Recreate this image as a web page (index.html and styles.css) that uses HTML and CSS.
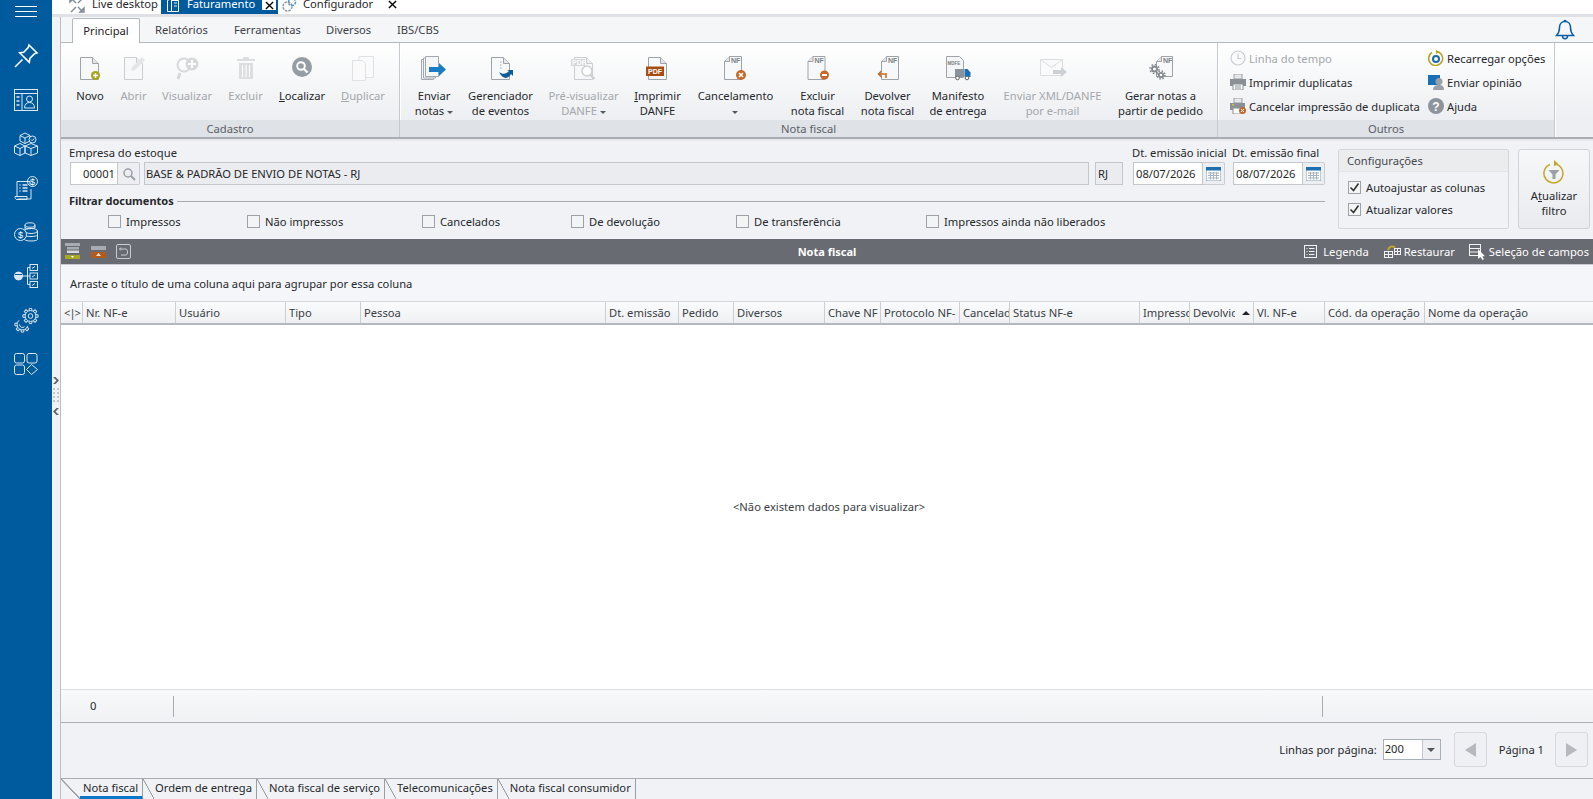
FILE: index.html
```html
<!DOCTYPE html>
<html lang="pt-BR">
<head>
  <meta charset="UTF-8">
  <title>Faturamento</title>
  <link rel="stylesheet" href="styles.css">
</head>
<body>
  <!-- simbolos reutilizados nos icones da faixa -->
  <svg class="defs" aria-hidden="true">
    <defs>
      <g id="page">
        <path d="M6.500 6.500h12l6 6v16h-18z" fill="#f7f8f9" stroke="#9ea3a9"/>
        <path d="M18.500 6.500v6h6" fill="#e3e5e8" stroke="#9ea3a9"/>
      </g>
      <g id="pageNf">
        <path d="M9.500 5.500h12v23h-17v-18z" fill="#f7f8f9" stroke="#9ea3a9"/>
        <path d="M4.500 10.500h5v-5" fill="#e3e5e8" stroke="#9ea3a9"/>
        <text x="11" y="12" class="nf-tag">NF</text>
      </g>
      <path id="tooth" d="M-1.500-5.400l.3-2.200h2.400l.3 2.200" fill="none" stroke="#dbe8f3"/>
    </defs>
  </svg>

  <aside class="sidebar">
    <div class="hamburger"><span></span><span></span><span></span></div>
    <nav class="side-icons">
      <a class="side-item"><svg width="26" height="26" viewBox="0 0 26 26" fill="none" stroke="#fff" stroke-width="1.600"><path d="M16 2l8 8-2.500.8-4.600 4.600-.6 4-3-3-3.600-3.600-3-3 4-.6L15.200 4.500z"/><path d="M9.500 16.500L2 24"/></svg></a>
      <a class="side-item"><svg width="24" height="22" viewBox="0 0 24 22" fill="none" stroke="#dbe8f3"><rect x=".5" y=".5" width="23" height="21"/><path d="M.5 4.500h23M8 4.500v17"/><path d="M2.500 8h3M2.500 12h3M2.500 16h3" stroke-width="1.400"/><circle cx="15.500" cy="10" r="3"/><path d="M10.500 19c0-3.500 2-5.500 5-5.500s5 2 5 5.500z"/></svg></a>
      <a class="side-item"><svg width="24" height="24" viewBox="0 0 24 24" fill="none" stroke="#dbe8f3"><path d="M11 1l5 2.500v5.500l-5 2.500-5-2.500V3.500zM6 3.500l5 2.500 5-2.500M11 6v5.500"/><path d="M6 11.500l5 2.500v7l-5 2.500-5.500-2.500v-7zM.5 14l5.500 2.500 5-2.500M6 16.500v7"/><path d="M17 11.500l6.500 2.500v7L17 23.500 11 21v-7zM11 14l6 2.500 6.500-2.500M17 16.500v7"/><circle cx="18.500" cy="7.500" r="3.500" fill="#005a9e"/><path d="M17 7.500l1.200 1.200 2-2.200"/></svg></a>
      <a class="side-item"><svg width="24" height="24" viewBox="0 0 24 24" fill="none" stroke="#dbe8f3"><path d="M3 20V5.500h13v3M17 13v10H4"/><path d="M1 20.500h12v3H3c-1.500 0-2-1.500-2-3z"/><path d="M5.500 9h1M8.500 9h5M5.500 12h1M8.500 12h5M5.500 15h1M8.500 15h5" stroke-width="1.400"/><circle cx="18.500" cy="5.500" r="5"/><text x="18.500" y="8.500" class="side-dollar">$</text></svg></a>
      <a class="side-item"><svg width="24" height="20" viewBox="0 0 24 20" fill="none" stroke="#dbe8f3"><ellipse cx="16" cy="3" rx="5" ry="2.200"/><path d="M11 3v5M21 3v3"/><path d="M11 5.500c1 1.500 8 1.500 10 0"/><ellipse cx="17" cy="9" rx="6.500" ry="2.500"/><path d="M10.500 9v8.500c1 2 12 2 13 0V9M10.500 13c1 2 12 2 13 0"/><circle cx="6.500" cy="12.500" r="6" fill="#005a9e"/><text x="6.500" y="16" class="side-dollar">$</text></svg></a>
      <a class="side-item"><svg width="24" height="24" viewBox="0 0 24 24" fill="none" stroke="#dbe8f3"><rect x="16" y=".5" width="7.500" height="6"/><rect x="16" y="9" width="7.500" height="6"/><rect x="16" y="17.500" width="7.500" height="6"/><path d="M16 3.500h-2.500v17H16M13.500 12H16M8 12h5.500"/><path d="M18 4.500l3-2M18 13l3-2M18 21.500l3-2"/><circle cx="4.500" cy="12" r="4" fill="#dbe8f3"/><path d="M1 10.500h7" stroke="#005a9e"/></svg></a>
      <a class="side-item"><svg width="25" height="25" viewBox="0 0 25 25" fill="none" stroke="#dbe8f3">
        <g transform="translate(16.500 8)"><circle r="5.400"/><circle r="2.300"/><use href="#tooth"/><use href="#tooth" transform="rotate(45)"/><use href="#tooth" transform="rotate(90)"/><use href="#tooth" transform="rotate(135)"/><use href="#tooth" transform="rotate(180)"/><use href="#tooth" transform="rotate(225)"/><use href="#tooth" transform="rotate(270)"/><use href="#tooth" transform="rotate(315)"/></g>
        <g transform="translate(8.500 16.500)"><path d="M-3.500-4.100a5.400 5.400 0 1 0 8.700 5.500"/><path d="M-3 0a3 3 0 0 0 5 2.200"/><use href="#tooth" transform="rotate(270)"/><use href="#tooth" transform="rotate(225)"/><use href="#tooth" transform="rotate(180)"/><use href="#tooth" transform="rotate(135)"/></g>
      </svg></a>
      <a class="side-item"><svg width="24" height="22" viewBox="0 0 24 22" fill="none" stroke="#dbe8f3"><rect x=".5" y=".5" width="10" height="9.500" rx="2"/><rect x="13" y=".5" width="10" height="9.500" rx="2"/><rect x=".5" y="12" width="10" height="9.500" rx="2"/><path d="M17.500 11.500l6 5-6 5-5-5z"/></svg></a>
    </nav>
  </aside>

  <div class="content">
    <div class="doc-tabs">
      <div class="doc-tab doc-tab-first">
        <svg width="16" height="16" viewBox="0 0 16 16" fill="none" stroke="#7f8a96" stroke-width="1.400"><path d="M2 1l5 5M14 1L9 6M2 15l5-5M14 15l-5-5"/><path d="M1 1h4L1 5zM15 15h-4l4-4z" fill="#aeb6be"/></svg>
        <span>Live desktop</span>
      </div>
      <div class="doc-tab doc-tab-active">
        <svg width="14" height="14" viewBox="0 0 14 14" fill="none" stroke="#fff"><path d="M1.500 2.500l4-2v13h-4zM5.500 2.500h7v11h-7"/><path d="M8 5h3M8 8h3" stroke-width=".9"/></svg>
        <span>Faturamento</span>
        <b class="doc-close-box"><svg width="9" height="9" viewBox="0 0 10 10" stroke="#000" stroke-width="1.500"><path d="M1 1l8 8M9 1l-8 8"/></svg></b>
      </div>
      <div class="doc-tab doc-tab-last">
        <svg width="16" height="16" viewBox="0 0 16 16" fill="none" stroke="#8b99a8" stroke-width="1.500" stroke-dasharray="2.500 1"><circle cx="6.500" cy="9.500" r="4.500"/><circle cx="11" cy="5" r="3.500" stroke="#5b93c7"/></svg>
        <span>Configurador</span>
        <b class="doc-close"><svg width="9" height="9" viewBox="0 0 10 10" stroke="#000" stroke-width="1.500"><path d="M1 1l8 8M9 1l-8 8"/></svg></b>
      </div>
    </div>

    <div class="workspace">
      <div class="splitter">
        <svg width="8" height="38" viewBox="0 0 8 38" fill="#5f6369"><path d="M1 0h2.500L7 3.500 3.500 7H1l3.500-3.500zM7 31H4.500L1 34.500 4.500 38H7l-3.500-3.500z"/><path d="M1 11h2v2H1zM5 11h2v2H5zM1 15h2v2H1zM5 15h2v2H5zM1 19h2v2H1zM5 19h2v2H5zM1 23h2v2H1zM5 23h2v2H5z" fill="#c3c6ca"/></svg>
      </div>

      <main class="main">
        <div class="ribbon-tabs">
          <span class="r-tab r-tab-active">Principal</span>
          <span class="r-tab">Relatórios</span>
          <span class="r-tab">Ferramentas</span>
          <span class="r-tab">Diversos</span>
          <span class="r-tab">IBS/CBS</span>
          <svg class="bell" width="20" height="22" viewBox="0 0 20 22" fill="none" stroke="#0a5fa3" stroke-width="1.500"><path d="M10 2.500c-3.500 0-5.500 2.700-5.500 6 0 4-1 6-3 8h17c-2-2-3-4-3-8 0-3.300-2-6-5.500-6z"/><path d="M9 2.500c0-1.500 2-1.500 2 0M7.500 17c0 3.500 5 3.500 5 0"/></svg>
        </div>

        <div class="ribbon">
          <section class="rb-group rb-cadastro">
            <div class="rb-items">
              <button class="rb-btn"><svg width="32" height="32"><use href="#page"/><circle cx="21.500" cy="24.500" r="4.500" fill="#a8a51c"/><path d="M19 24.500h5M21.500 22v5" stroke="#fff" stroke-width="1.400"/></svg><span>Novo</span></button>
              <button class="rb-btn is-off"><svg width="32" height="32" class="faded"><use href="#page"/><path d="M13 20l1-4L24 6l3 3-10 10z" fill="#cfd2d6"/></svg><span>Abrir</span></button>
              <button class="rb-btn is-off"><svg width="32" height="32" viewBox="0 0 32 32"><circle cx="13" cy="14" r="6.500" fill="none" stroke="#d6d8db" stroke-width="2"/><path d="M9 22l-2 6" stroke="#d6d8db" stroke-width="3"/><circle cx="21" cy="13" r="6.500" fill="#d6d8db"/><path d="M21 9v8M17 13h8" stroke="#fff" stroke-width="2"/></svg><span>Visualizar</span></button>
              <button class="rb-btn is-off"><svg width="32" height="32" viewBox="0 0 32 32" fill="#dcdee1"><path d="M13 6h6v2h6v2H7V8h6z"/><path d="M9 12h14v16H9z"/><path d="M12.500 14v12M16 14v12M19.500 14v12" stroke="#fff"/></svg><span>Excluir</span></button>
              <button class="rb-btn"><svg width="32" height="32" viewBox="0 0 32 32"><circle cx="16" cy="16" r="10" fill="#959ca4"/><circle cx="15" cy="15" r="3.800" fill="none" stroke="#fff" stroke-width="2"/><path d="M18 18l3.500 3.500" stroke="#fff" stroke-width="2.400"/></svg><span><u>L</u>ocalizar</span></button>
              <button class="rb-btn is-off"><svg width="32" height="32" viewBox="0 0 32 32" fill="#fafafa" stroke="#dfe1e4"><path d="M12 5.500h14.500v21H12z"/><path d="M5.500 9.500h10l3 3v17h-13z"/></svg><span><u>D</u>uplicar</span></button>
            </div>
            <div class="rb-title">Cadastro</div>
          </section>

          <section class="rb-group rb-nota">
            <div class="rb-items">
              <button class="rb-btn"><svg width="32" height="32" viewBox="0 0 32 32"><g fill="#f4f5f6" stroke="#a3a8ae"><path d="M3.500 8.500h12v20h-12z"/><path d="M5.500 7h12v20h-12z"/><path d="M7.500 5.500h13v20h-13z"/></g><path d="M11 17h10v-4l7 6.500-7 6.500v-4H11z" fill="#1a7cc4" transform="translate(0 -1)"/></svg><span>Enviar<br>notas <i class="caret"></i></span></button>
              <button class="rb-btn"><svg width="32" height="32"><use href="#page"/><path d="M15 11h1.500M15 14h1.500M15 17h1.500" stroke="#9ea3a9"/><path d="M14 21c4 3 7 2 10-1l-2-1h6v6l-2-2c-3 5-8 6-12-2z" fill="#0f5c96"/></svg><span>Gerenciador<br>de eventos</span></button>
              <button class="rb-btn is-off"><svg width="32" height="32" class="faded"><use href="#page"/><rect x="3" y="8" width="14" height="7" fill="#b3b6ba"/><text x="4" y="14" class="pdf-tag">PDF</text><circle cx="19" cy="20" r="5" fill="#fff" stroke="#a4a8ad" stroke-width="1.500"/><path d="M22.500 24l4 4" stroke="#a4a8ad" stroke-width="2.400"/></svg><span>Pré-visualizar<br>DANFE <i class="caret"></i></span></button>
              <button class="rb-btn"><svg width="32" height="32"><use href="#page"/><rect x="4" y="15.500" width="18" height="9.500" fill="#a74e15"/><text x="6" y="23" class="pdf-tag">PDF</text></svg><span><u>I</u>mprimir<br>DANFE</span></button>
              <button class="rb-btn"><svg width="32" height="32"><use href="#pageNf"/><circle cx="21" cy="24" r="5" fill="#c7692a"/><path d="M19 22l4 4M23 22l-4 4" stroke="#fff" stroke-width="1.600"/></svg><span>Cancelamento<br><i class="caret"></i></span></button>
              <button class="rb-btn"><svg width="32" height="32"><use href="#pageNf" x="1.500"/><circle cx="22.500" cy="24" r="4.500" fill="#c7692a"/><path d="M20 24h5" stroke="#fff" stroke-width="2"/></svg><span>Excluir<br>nota fiscal</span></button>
              <button class="rb-btn"><svg width="32" height="32"><use href="#pageNf" x="5"/><path d="M14 27v-4H7M9.500 20L6.500 23l3 3" fill="none" stroke="#c7692a" stroke-width="1.500"/></svg><span>Devolver<br>nota fiscal</span></button>
              <button class="rb-btn"><svg width="32" height="32" viewBox="0 0 32 32"><path d="M4.500 5.500h13l4 4v17h-17z" fill="#f4f5f6" stroke="#9ea3a9"/><text x="5.500" y="13.500" class="mdfe-tag">MDFE</text><rect x="13" y="18" width="9" height="8" fill="#8b9299"/><path d="M22.500 18h3l3 3.500V26h-6z" fill="#1a70b8"/><circle cx="15.500" cy="27" r="1.800" fill="#fff" stroke="#666"/><circle cx="25" cy="27" r="1.800" fill="#fff" stroke="#666"/></svg><span>Manifesto<br>de entrega</span></button>
              <button class="rb-btn is-off"><svg width="32" height="32" viewBox="0 0 32 32"><path d="M3.500 8.500h22v16h-22z" fill="#fafafa" stroke="#dcdee1"/><path d="M3.500 8.500l11 8 11-8" fill="none" stroke="#dcdee1"/><path d="M16 19h8v-3l6 5-6 5v-3h-8z" fill="#cdd0d4"/></svg><span>Enviar XML/DANFE<br>por e-mail</span></button>
              <button class="rb-btn"><svg width="32" height="32" viewBox="0 0 32 32"><path d="M16.500 5.500h11v20h-16v-15z" fill="#f7f8f9" stroke="#9ea3a9"/><path d="M11.500 10.500h5v-5" fill="#e3e5e8" stroke="#9ea3a9"/><text x="18" y="12" class="nf-tag">NF</text><g fill="#fff" stroke="#858a90"><circle cx="9.500" cy="18" r="2.500" stroke-width="2"/><circle cx="9.500" cy="18" r="4.500" fill="none" stroke-width="1.500" stroke-dasharray="1.700 1.800"/><circle cx="16" cy="24" r="2.200" stroke-width="1.800"/><circle cx="16" cy="24" r="4" fill="none" stroke-width="1.500" stroke-dasharray="1.600 1.550"/></g></svg><span>Gerar notas a<br>partir de pedido</span></button>
            </div>
            <div class="rb-title">Nota fiscal</div>
          </section>

          <section class="rb-group rb-outros">
            <div class="rb-lists">
              <ul class="rb-list">
                <li class="is-off"><svg width="16" height="16" viewBox="0 0 16 16" fill="none" stroke="#c9ccd0" stroke-width="1.200"><circle cx="8" cy="8" r="7"/><path d="M8 3.500V8.500h3.500"/></svg>Linha do tempo</li>
                <li><svg width="16" height="16" viewBox="0 0 16 16"><path d="M4 0h8v5H4z" fill="#e6e7e9" stroke="#9ca0a5"/><path d="M0 5h16v7H0z" fill="#8a9096"/><path d="M3 10h10v6H3z" fill="#fff" stroke="#8a9096"/><path d="M5 12h6M5 14h6" stroke="#8a9096"/></svg>Imprimir duplicatas</li>
                <li><svg width="16" height="16" viewBox="0 0 16 16"><path d="M4 0h8v5H4z" fill="#e6e7e9" stroke="#9ca0a5"/><path d="M0 5h15v7H0z" fill="#8a9096"/><path d="M2 6h2v1.500H2z" fill="#cfc53c"/><path d="M3 10h9v6H3z" fill="#fff" stroke="#8a9096"/><circle cx="12.500" cy="12.500" r="3.500" fill="#c7692a"/><path d="M11 11l3 3M14 11l-3 3" stroke="#fff"/></svg>Cancelar impressão de duplicata</li>
              </ul>
              <ul class="rb-list">
                <li><svg width="16" height="16" viewBox="0 0 16 16" fill="none"><path d="M4 2.500a7 7 0 1 0 4-1" stroke="#b9a21c" stroke-width="1.500"/><path d="M8 0l3 2-3 2z" fill="#b9a21c"/><circle cx="8" cy="9" r="3" stroke="#1b69ad" stroke-width="2"/></svg>Recarregar opções</li>
                <li><svg width="16" height="16" viewBox="0 0 16 16"><path d="M0 1h12v10H0z" fill="#1a70b8"/><circle cx="11" cy="7.500" r="3.500" fill="#9aa0a6"/><path d="M5 16c0-4 3-5 6-5s5 1 5 5z" fill="#9aa0a6"/></svg>Enviar opinião</li>
                <li><svg width="16" height="16" viewBox="0 0 16 16"><circle cx="8" cy="8" r="8" fill="#8d949c"/><text x="8" y="12.500" class="help-tag">?</text></svg><span>Ajuda</span></li>
              </ul>
            </div>
            <div class="rb-title">Outros</div>
          </section>
          <div class="rb-rest"></div>
        </div>

        <div class="filters">
          <div class="filters-left">
            <div class="field-row">
              <div class="field field-empresa">
                <label>Empresa do estoque</label>
                <div class="field-inputs">
                  <input class="in in-code" value="00001">
                  <span class="in-btn"><svg width="14" height="14" viewBox="0 0 14 14" fill="none" stroke="#9aa0a6" stroke-width="1.500"><circle cx="6" cy="6" r="4"/><path d="M9 9l4 4" stroke-width="2"/></svg></span>
                  <input class="in in-name" value="BASE &amp; PADRÃO DE ENVIO DE NOTAS - RJ" readonly>
                </div>
              </div>
              <div class="field field-uf">
                <label>&nbsp;</label>
                <input class="in in-uf" value="RJ" readonly>
              </div>
              <div class="field field-date">
                <label>Dt. emissão inicial</label>
                <div class="field-inputs">
                  <input class="in in-date" value="08/07/2026">
                  <span class="in-btn"><svg width="15" height="14" viewBox="0 0 15 14"><path d="M0 0h15v14H0z" fill="#fff" stroke="#7c99b3"/><path d="M0 0h15v3.500H0z" fill="#1d6fb0"/><path d="M2 6h11M2 8.500h11M2 11h11M4.500 5v7.500M7.500 5v7.500M10.500 5v7.500" stroke="#a8b2bc"/></svg></span>
                </div>
              </div>
              <div class="field field-date">
                <label>Dt. emissão final</label>
                <div class="field-inputs">
                  <input class="in in-date" value="08/07/2026">
                  <span class="in-btn"><svg width="15" height="14" viewBox="0 0 15 14"><path d="M0 0h15v14H0z" fill="#fff" stroke="#7c99b3"/><path d="M0 0h15v3.500H0z" fill="#1d6fb0"/><path d="M2 6h11M2 8.500h11M2 11h11M4.500 5v7.500M7.500 5v7.500M10.500 5v7.500" stroke="#a8b2bc"/></svg></span>
                </div>
              </div>
            </div>
            <div class="legend"><b>Filtrar documentos</b><span class="legend-line"></span></div>
            <div class="checks">
              <label class="chk"><span class="box"></span>Impressos</label>
              <label class="chk"><span class="box"></span>Não impressos</label>
              <label class="chk"><span class="box"></span>Cancelados</label>
              <label class="chk"><span class="box"></span>De devolução</label>
              <label class="chk"><span class="box"></span>De transferência</label>
              <label class="chk"><span class="box"></span>Impressos ainda não liberados</label>
            </div>
          </div>

          <div class="config">
            <div class="config-head">Configurações</div>
            <div class="config-body">
              <label class="chk"><span class="box"><svg width="11" height="11" viewBox="0 0 11 11" fill="none" stroke="#333" stroke-width="1.600"><path d="M1.500 5.500l3 3 5-7"/></svg></span>Autoajustar as colunas</label>
              <label class="chk"><span class="box"><svg width="11" height="11" viewBox="0 0 11 11" fill="none" stroke="#333" stroke-width="1.600"><path d="M1.500 5.500l3 3 5-7"/></svg></span>Atualizar valores</label>
            </div>
          </div>

          <button class="refresh">
            <svg width="22" height="24" viewBox="0 0 22 24" fill="none"><path d="M7 4.500a9.500 9.500 0 1 0 5-.5" stroke="#c4a72a" stroke-width="1.500"/><path d="M11 0l4 3.500-4 3z" fill="#c4a72a"/><path d="M5.500 10h11l-4 4.500V19h-3v-4.500z" fill="#9aa0a6"/></svg>
            <span>A<u>t</u>ualizar<br>filtro</span>
          </button>
        </div>

        <div class="grid-bar">
          <div class="grid-bar-left">
            <svg width="16" height="17" viewBox="0 0 16 17"><path d="M0 0h15v3H0z" fill="#a8acb2"/><path d="M2 4h12v2.500H2z" fill="#a8acb2"/><path d="M2 7.500h12v2.500H2z" fill="#d5d7da"/><path d="M0 12h15v4H0z" fill="#aaa81e"/><path d="M6 13h3l-1.500 2z" fill="#fff"/></svg>
            <svg width="15" height="12" viewBox="0 0 15 12"><path d="M0 0h15v4H0z" fill="#a8acb2"/><path d="M0 6h15v6H0z" fill="#b25b1e"/><path d="M5 10l2.500-3L10 10z" fill="#f3e3d3"/></svg>
            <svg width="15" height="15" viewBox="0 0 15 15" fill="none" stroke="#c9ccd0"><rect x=".5" y=".5" width="14" height="14" rx="1.500"/><path d="M5 3.500L3.500 5 5 6.500M3.500 5H10c2 0 2 6 0 6H5"/></svg>
          </div>
          <div class="grid-bar-title">Nota fiscal</div>
          <div class="grid-bar-right">
            <span class="bar-act bar-legenda"><svg width="13" height="13" viewBox="0 0 13 13" fill="none" stroke="#f2f3f4"><rect x=".5" y=".5" width="12" height="12"/><path d="M2.500 3.500h1M5 3.500h5.500M2.500 6.500h1M5 6.500h5.500M2.500 9.500h1M5 9.500h5.500"/></svg>Legenda</span>
            <span class="bar-act bar-restaurar"><svg width="17" height="13" viewBox="0 0 17 13" fill="none" stroke="#f2f3f4"><rect x=".5" y="6.500" width="8" height="6"/><rect x="10.500" y="3.500" width="6" height="6"/><path d="M.5 9.500h8M4.500 6.500v6M10.500 6.500h6M13.500 3.500v6"/><path d="M4 5c1-4 4-4 7-3" stroke="#c0a52a" stroke-width="2"/></svg>Restaurar</span>
            <span class="bar-act bar-selecao"><svg width="17" height="16" viewBox="0 0 17 16" fill="none" stroke="#f2f3f4"><rect x=".5" y=".5" width="11" height="11"/><path d="M.5 4.500h11M.5 8h11"/><path d="M9 5v10l2.500-2 2 3 1.500-.8-1.800-3H16z" fill="#fff" stroke="none"/></svg>Seleção de campos</span>
          </div>
        </div>

        <div class="group-panel">Arraste o título de uma coluna aqui para agrupar por essa coluna</div>

        <div class="col-head">
          <span class="col-mark">&lt;|&gt;</span>
          <span>Nr. NF-e</span>
          <span>Usuário</span>
          <span>Tipo</span>
          <span>Pessoa</span>
          <span>Dt. emissão</span>
          <span>Pedido</span>
          <span>Diversos</span>
          <span>Chave NF</span>
          <span>Protocolo NF-</span>
          <span>Cancelad</span>
          <span>Status NF-e</span>
          <span>Impresso</span>
          <span class="col-sorted"><em>Devolvido</em><i class="sort-up"></i></span>
          <span>Vl. NF-e</span>
          <span>Cód. da operação</span>
          <span>Nome da operação</span>
        </div>

        <div class="grid-body">&lt;Não existem dados para visualizar&gt;</div>

        <div class="grid-foot">
          <span class="foot-count">0</span>
          <span class="foot-fill"></span>
        </div>

        <div class="pager">
          <span class="pager-label">Linhas por página:</span>
          <div class="combo"><span class="combo-val">200</span><span class="combo-arrow"></span></div>
          <button class="pg-btn"><span class="tri-left"></span></button>
          <span class="pager-page">Página 1</span>
          <button class="pg-btn"><span class="tri-right"></span></button>
        </div>

        <div class="sheet-tabs">
          <span class="sheet-slant sheet-slant-first"></span>
          <span class="sheet sheet-active">Nota fiscal</span>
          <span class="sheet-slant"></span>
          <span class="sheet">Ordem de entrega</span>
          <span class="sheet-slant"></span>
          <span class="sheet">Nota fiscal de serviço</span>
          <span class="sheet-slant"></span>
          <span class="sheet">Telecomunicações</span>
          <span class="sheet-slant"></span>
          <span class="sheet">Nota fiscal consumidor</span>
        </div>
      </main>
    </div>
  </div>
</body>
</html>
```

FILE: styles.css
```css
/* Estilos da tela de faturamento */
* {
  box-sizing: border-box;
}

body {
  font-family: "Noto Sans", "Open Sans", Arial, sans-serif;
  font-size: 11.2px;
  color: #26282c;
  display: flex;
  height: 799px;
  margin: 0;
  overflow: hidden;
  background-color: #f0f2f5;
}

button {
  font: inherit;
  color: inherit;
  padding: 0;
  background: none;
  border: 0;
}

.defs {
  position: absolute;
  width: 0;
  height: 0;
}

.nf-tag {
  font: bold 7px "Liberation Sans", sans-serif;
  fill: #7c8187;
}

.pdf-tag {
  font: bold 7px "Liberation Sans", sans-serif;
  fill: #fff;
}

.mdfe-tag {
  font: bold 4.500px "Liberation Sans", sans-serif;
  fill: #777c82;
}

.help-tag {
  font: bold 12px "Liberation Sans", sans-serif;
  fill: #fff;
  text-anchor: middle;
}

.side-dollar {
  font: 9px "Liberation Sans", sans-serif;
  fill: #fff;
  stroke: none;
  text-anchor: middle;
}

/* barra lateral */
.sidebar {
  width: 52px;
  flex: none;
  background-color: #005a9e;
}

.hamburger {
  height: 22px;
  padding: 6px 15px 0;
}

.hamburger span {
  display: block;
  height: 1px;
  margin-bottom: 4px;
  background-color: #fff;
}

.side-icons {
  margin-top: 12px;
}

.side-item {
  height: 44px;
  display: flex;
  align-items: center;
  justify-content: center;
}

/* abas de documentos */
.content {
  flex: 1;
  min-width: 0;
  display: flex;
  flex-direction: column;
}

.doc-tabs {
  height: 17px;
  flex: none;
  display: flex;
  padding-left: 17px;
  background-color: #fff;
  border-bottom: 3px solid #dfe1e4;
  overflow: hidden;
}

.doc-tab {
  display: flex;
  align-items: center;
  flex: none;
  height: 14px;
  white-space: nowrap;
}

.doc-tab > span {
  margin-bottom: 6px;
  line-height: 14px;
}

.doc-tab > svg {
  flex: none;
  margin-top: -4px;
}

.doc-tab-first {
  width: 92px;
  gap: 7px;
}

.doc-tab-active {
  width: 117px;
  padding: 0 2px 0 5px;
  gap: 7px;
  background-color: #005a9e;
  color: #fff;
}

.doc-tab-last {
  gap: 6px;
  margin-left: 3px;
}

.doc-close-box {
  width: 14px;
  height: 10px;
  margin-left: auto;
  align-self: flex-start;
  display: flex;
  align-items: center;
  justify-content: center;
  background-color: #fff;
}

.doc-close {
  display: flex;
  margin: -6px 0 0 9px;
}

.workspace {
  flex: 1;
  min-height: 0;
  display: flex;
}

.splitter {
  width: 8px;
  flex: none;
  display: flex;
  align-items: center;
  padding-bottom: 24px;
}

.main {
  flex: 1;
  min-width: 0;
  display: flex;
  flex-direction: column;
  border-left: 1px solid #bcc0c6;
}

/* abas da faixa */
.ribbon-tabs {
  height: 26px;
  flex: none;
  display: grid;
  grid-template-columns: 68px 79px 92px 71px 1fr auto;
  align-items: end;
  padding-left: 11px;
  background-color: #f4f6f8;
  border-bottom: 1px solid #b5b8bd;
}

.r-tab {
  height: 24px;
  padding: 2px 0 0 15px;
  line-height: 20px;
  color: #3c4046;
}

.r-tab-active {
  padding: 2px 0 0;
  height: 25px;
  margin-bottom: -1px;
  text-align: center;
  color: #1f2125;
  background-color: #fff;
  border: 1px solid #b5b8bd;
  border-bottom: 0;
  border-radius: 2px 2px 0 0;
}

.bell {
  margin-right: 18px;
  align-self: center;
}

/* faixa de comandos */
.ribbon {
  height: 96px;
  flex: none;
  display: flex;
  background: linear-gradient(#fff, #edeff2 80%);
  border-bottom: 2px solid #a9acb1;
}

.rb-group {
  flex: none;
  display: flex;
  flex-direction: column;
  border-right: 1px solid #c6c9ce;
  box-shadow: 1px 0 0 #fff;
}

.rb-cadastro {
  width: 339px;
}

.rb-nota {
  width: 818px;
}

.rb-outros {
  width: 337px;
}

.rb-rest {
  flex: 1;
  margin-left: 1px;
}

.rb-items {
  flex: 1;
  display: grid;
  padding-left: 9px;
}

.rb-cadastro .rb-items {
  grid-template-columns: 40px 47px 60px 57px 56px 66px;
}

.rb-nota .rb-items {
  padding-left: 0;
  grid-template-columns: 68px 65px 101px 47px 109px 55px 85px 56px 133px 83px;
}

.rb-btn {
  display: flex;
  flex-direction: column;
  align-items: center;
  padding-top: 8px;
  line-height: 15px;
  text-align: center;
  white-space: nowrap;
}

.rb-btn svg {
  margin-bottom: 5px;
  flex: none;
}

.rb-title {
  height: 17px;
  line-height: 17px;
  text-align: center;
  color: #5c6068;
  background-color: #dfe2e6;
}

.is-off {
  color: #a4a7ac;
}

.faded {
  opacity: .5;
}

.caret {
  display: inline-block;
  vertical-align: middle;
  border: 3px solid transparent;
  border-top-color: #55595f;
  border-bottom: 0;
}

.rb-lists {
  flex: 1;
  display: flex;
  padding: 3px 0 0 12px;
}

.rb-list {
  list-style: none;
  margin: 0;
  padding: 0;
}

.rb-list:first-child {
  width: 198px;
}

.rb-list li {
  display: flex;
  align-items: center;
  gap: 3px;
  height: 24px;
  white-space: nowrap;
}

/* filtros */
.filters {
  height: 100px;
  flex: none;
  display: flex;
  align-items: flex-start;
  padding-left: 8px;
  background-color: #f0f2f5;
  border-top: 2px solid #e6e8eb;
}

.filters-left {
  width: 1256px;
  flex: none;
  padding-top: 5px;
}

.field-row {
  display: flex;
}

.field label {
  display: block;
  height: 16px;
  line-height: 14px;
  white-space: nowrap;
}

.field-empresa {
  width: 1020px;
  flex: none;
  margin-right: 6px;
}

.field-uf {
  width: 28px;
  flex: none;
  margin-right: 10px;
}

.field-date {
  width: 92px;
  flex: none;
  margin-right: 8px;
}

.field-date label {
  margin-left: -1px;
}

.field-date:last-child {
  margin-right: 0;
}

.field-inputs {
  display: flex;
}

.in {
  height: 23px;
  min-width: 0;
  padding: 0 2px;
  font: inherit;
  color: inherit;
  background-color: #fff;
  border: 1px solid #c3c6cb;
  border-radius: 0;
  outline: 0;
}

.in-code {
  width: 48px;
  margin-left: 1px;
  text-align: right;
}

.in-name {
  flex: 1;
  margin-left: 4px;
  padding-left: 1px;
  background-color: #eaecef;
}

.in-uf {
  width: 100%;
  background-color: #eaecef;
}

.in-date {
  width: 70px;
}

.in-btn {
  width: 22px;
  height: 23px;
  flex: none;
  display: flex;
  align-items: center;
  justify-content: center;
  background-color: #eceef1;
  border: 1px solid #c9ccd0;
  border-left: 0;
  border-radius: 0 2px 2px 0;
}

.legend {
  display: flex;
  align-items: center;
  gap: 3px;
  height: 16px;
  margin-top: 7px;
}

.legend b {
  font-size: 11px;
  white-space: nowrap;
}

.legend-line {
  flex: 1;
  height: 1px;
  margin-top: 2px;
  background-color: #a7aaaf;
}

.checks {
  display: grid;
  grid-template-columns: 139px 175px 149px 165px 190px auto;
  margin-top: 2px;
  padding-left: 39px;
}

.chk {
  display: flex;
  align-items: center;
  gap: 5px;
  height: 22px;
  white-space: nowrap;
}

.box {
  width: 13px;
  height: 13px;
  flex: none;
  display: flex;
  align-items: center;
  justify-content: center;
  background-color: #f3f4f6;
  border: 1px solid #9ea2a8;
}

.config {
  width: 171px;
  height: 80px;
  flex: none;
  margin: 8px 0 0 13px;
  border: 1px solid #d3d6da;
  border-radius: 2px;
}

.config-head {
  height: 22px;
  padding-left: 8px;
  line-height: 21px;
  color: #44484e;
  background-color: #ebecee;
  border-bottom: 1px solid #e2e4e7;
}

.config-body {
  padding: 4px 0 0 9px;
}

.refresh {
  width: 72px;
  height: 80px;
  flex: none;
  display: flex;
  flex-direction: column;
  align-items: center;
  margin: 8px 0 0 9px;
  padding-top: 10px;
  line-height: 15px;
  background: linear-gradient(#f6f7f9, #e9ebee);
  border: 1px solid #cfd2d6;
  border-radius: 3px;
}

.refresh svg {
  flex: none;
  margin-bottom: 4px;
}

/* barra da grade */
.grid-bar {
  height: 26px;
  flex: none;
  display: grid;
  grid-template-columns: 1fr auto 1fr;
  align-items: center;
  color: #fff;
  background-color: #696b72;
  border-bottom: 1px solid #c9ccd2;
}

.grid-bar-left {
  display: flex;
  align-items: center;
  gap: 10px;
  padding-left: 4px;
}

.grid-bar-title {
  font-weight: bold;
  font-size: 11px;
}

.grid-bar-right {
  display: flex;
  justify-content: flex-end;
  padding-right: 4px;
}

.bar-act {
  display: flex;
  align-items: center;
  gap: 3px;
  white-space: nowrap;
}

.bar-legenda {
  gap: 6px;
}

.bar-restaurar {
  margin-left: 15px;
}

.bar-selecao {
  margin-left: 14px;
}

.group-panel {
  height: 36px;
  flex: none;
  padding-left: 9px;
  line-height: 38px;
  background-color: #f4f6f9;
}

.col-head {
  height: 24px;
  flex: none;
  display: grid;
  grid-template-columns: 22px 93px 110px 75px 245px 73px 55px 91px 56px 79px 50px 130px 50px 64px 71px 100px 1fr;
  background: linear-gradient(#fafbfc, #eef0f3);
  border-top: 1px solid #d5d7db;
  border-bottom: 2px solid #b5b8c0;
  color: #3a3e44;
}

.col-head span {
  min-width: 0;
  overflow: hidden;
  padding-left: 3px;
  line-height: 22px;
  white-space: nowrap;
  border-right: 1px solid #cbced3;
}

.col-head span:last-child {
  border-right: 0;
}

.col-head .col-mark {
  letter-spacing: -1px;
}

.col-head .col-sorted {
  display: flex;
  align-items: center;
}

.col-sorted em {
  width: 42px;
  flex: none;
  overflow: hidden;
  font-style: normal;
}

.sort-up {
  margin-left: 7px;
  border: 4px solid transparent;
  border-top: 0;
  border-bottom: 4px solid #222;
}

.grid-body {
  flex: 1;
  min-height: 0;
  display: flex;
  align-items: center;
  justify-content: center;
  padding: 0 0 2px 4px;
  color: #3a3e44;
  background-color: #fff;
}

.grid-foot {
  height: 34px;
  flex: none;
  display: flex;
  align-items: center;
  background: linear-gradient(#f8f9fa, #eff1f4);
  border-top: 1px solid #dcdfe3;
  border-bottom: 1px solid #adb0b5;
}

.foot-count {
  width: 113px;
  height: 21px;
  flex: none;
  padding-left: 29px;
  line-height: 20px;
  border-right: 1px solid #a9acb1;
}

.foot-fill {
  width: 1149px;
  height: 21px;
  flex: none;
  border-right: 1px solid #a9acb1;
}

.pager {
  height: 56px;
  flex: none;
  display: flex;
  align-items: center;
  justify-content: flex-end;
  padding: 0 5px 2px 0;
  border-bottom: 1px solid #a9acb1;
}

.pager-label {
  margin-right: 6px;
}

.combo {
  width: 58px;
  height: 21px;
  display: flex;
  background-color: #fff;
  border: 1px solid #a9b0b8;
}

.combo-val {
  flex: 1;
  padding-left: 1px;
  line-height: 17px;
}

.combo-arrow {
  width: 18px;
  display: flex;
  align-items: center;
  justify-content: center;
  background-color: #eceef1;
  border-left: 1px solid #c3c6cb;
}

.combo-arrow::after {
  content: "";
  border: 4px solid transparent;
  border-top: 4px solid #555;
  border-bottom: 0;
}

.pg-btn {
  width: 33px;
  height: 35px;
  display: flex;
  align-items: center;
  justify-content: center;
  margin-left: 13px;
  background-color: #eef0f3;
  border: 1px solid #d5d8dc;
  border-radius: 3px;
}

.pager-page {
  margin: 0 -2px 0 12px;
}

.tri-left {
  border: 7px solid transparent;
  border-left: 0;
  border-right: 11px solid #b5b8bc;
}

.tri-right {
  border: 7px solid transparent;
  border-right: 0;
  border-left: 11px solid #b5b8bc;
}

/* abas de baixo */
.sheet-tabs {
  height: 20px;
  flex: none;
  display: flex;
  white-space: nowrap;
}

.sheet {
  padding: 0 4px 0 1px;
  line-height: 18px;
  border-right: 1px solid #9b9ea3;
}

.sheet-active {
  width: 63px;
  padding: 0 0 0 3px;
  border-bottom: 3px solid #0a78c8;
}

.sheet-slant {
  width: 11px;
  flex: none;
  background: linear-gradient(to top right, transparent 47%, #9b9ea3 49%, #9b9ea3 52%, transparent 54%);
}

.sheet-slant-first {
  width: 19px;
}
```
